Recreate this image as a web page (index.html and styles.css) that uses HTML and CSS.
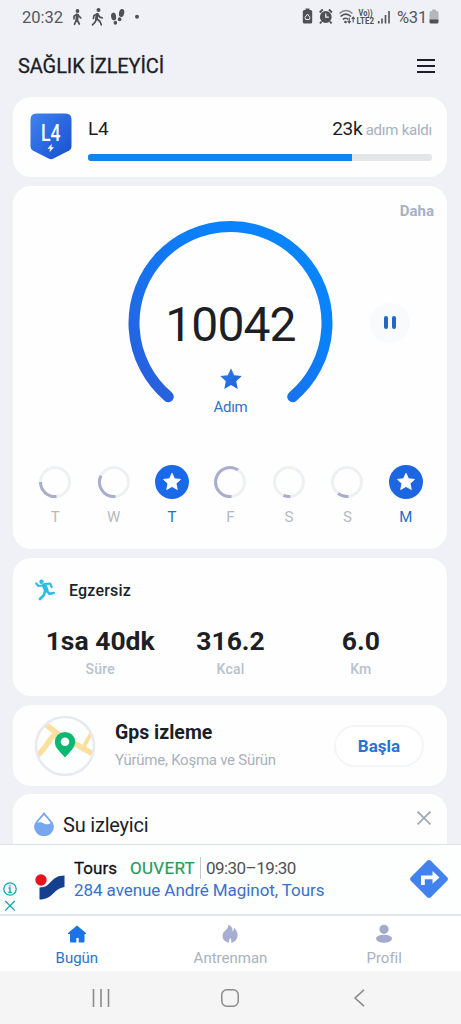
FILE: index.html
```
<!DOCTYPE html>
<html lang="tr">
<head>
    <meta charset="UTF-8">
    <meta name="viewport" content="width=device-width, initial-scale=1.0">
    <title>Sağlık İzleyici</title>
    <link rel="stylesheet" href="styles.css">
</head>
<body>
    <svg class="defs" width="0" height="0">
        <defs>
            <linearGradient id="blue" x1="0" y1="1" x2="1" y2="0">
                <stop offset="0" stop-color="#2b5cdb"/>
                <stop offset="0.65" stop-color="#0b80fb"/>
                <stop offset="1" stop-color="#0788ff"/>
            </linearGradient>
            <linearGradient id="deep" x1="0" y1="0" x2="1" y2="1">
                <stop offset="0" stop-color="#3f83ef"/>
                <stop offset="1" stop-color="#174fd0"/>
            </linearGradient>
            <linearGradient id="starfill" x1="0" y1="0" x2="1" y2="1">
                <stop offset="0" stop-color="#2a7ff0"/>
                <stop offset="1" stop-color="#2160d4"/>
            </linearGradient>
            <symbol id="star" viewBox="0 0 24 24">
                <path d="M12 1.2l3.2 7 7.6.9-5.6 5.2 1.5 7.6L12 18.1l-6.7 3.8 1.5-7.6L1.200 9.100l7.600-.9z" stroke-width="1" stroke-linejoin="round"/>
            </symbol>
        </defs>
    </svg>

    <div class="phone">
        <div class="status">
            <span class="time">20:32</span>
            <svg class="status-left" width="72" height="20" viewBox="0 0 72 20" fill="none" stroke="#505157" stroke-linecap="round" stroke-linejoin="round">
                <circle cx="7.500" cy="4" r="1.900" fill="#505157" stroke="none"/>
                <path d="M7.300 8l-.3 4" stroke-width="3"/>
                <path d="M7 12.500l2.300 4.500M6.800 12l-2.300 5.300M6.500 7.500L4 9.200v2.600M8 8l2.800 3" stroke-width="1.700"/>
                <circle cx="28.500" cy="3" r="2" fill="#505157" stroke="none"/>
                <path d="M27.300 7.500l-.8 4.300" stroke-width="3"/>
                <path d="M27 12l3 2.500 1.300 3.300M26.300 12.200l-1.200 3-2.600 2.600M27 7l-3 1.600-.6 2.800M28 7.500l1.800 2.600 2.300.8" stroke-width="1.700"/>
                <g fill="#505157" stroke="none">
                    <ellipse cx="43.600" cy="9.500" rx="2.500" ry="3.900" transform="rotate(-8 43.600 9.500)"/>
                    <ellipse cx="45.400" cy="15.800" rx="1.800" ry="2"/>
                    <ellipse cx="51.600" cy="6" rx="2.600" ry="4.100" transform="rotate(12 51.600 6)"/>
                    <ellipse cx="49.600" cy="12.200" rx="1.800" ry="2"/>
                    <circle cx="67" cy="9.800" r="2"/>
                </g>
            </svg>
            <svg class="status-right" width="92" height="20" viewBox="0 0 92 20" fill="none" stroke="#505157">
                <path d="M4.500 3v-1.500h4v1.500h1.200q1.500 0 1.500 1.500v10.500q0 1.500-1.500 1.500h-6.400q-1.500 0-1.500-1.500v-10.500q0-1.500 1.500-1.500z" fill="#505157" stroke="none"/>
                <path d="M4 10.500l2.500-3.500 2.500 3.500-.7 2H4.700z" stroke="#eef0f5" stroke-width="1"/>
                <circle cx="24.800" cy="10" r="5.900" fill="#505157" stroke="none"/>
                <path d="M18.700 5.500l3-3M30.900 5.500l-3-3M20.500 14.500l-1.500 2M29 14.500l1.500 2" stroke-width="1.900"/>
                <path d="M24.800 6.500v3.700h3" stroke="#eef0f5" stroke-width="1.300"/>
                <path d="M38.500 6.500q6.500-6 13 0" stroke="#85868b" stroke-width="1.500"/>
                <path d="M39.500 9.500q5.300-4.800 10.500 0M41.800 12.500q3-2.500 5.500 0" stroke-width="1.600"/>
                <circle cx="44.500" cy="15" r="1.300" fill="#505157" stroke="none"/>
                <path d="M48.200 10.500v5.500m-1.500-1.800l1.500 1.800 1.500-1.800M52.200 15.500v-5.500m-1.500 1.800l1.500-1.800 1.500 1.800" stroke-width="1.100"/>
                <text x="57.500" y="8.800" class="volte" textLength="14" lengthAdjust="spacingAndGlyphs">Vo))</text>
                <text x="55.500" y="16.800" class="volte" textLength="17.500" lengthAdjust="spacingAndGlyphs">LTE2</text>
                <path d="M77.700 14v2.500M81 11.500v5M84.500 8v8.500M88 4v12.500" stroke-width="1.600"/>
            </svg>
            <span class="percent">%31</span>
            <svg class="battery" width="10" height="16" viewBox="0 0 10 16">
                <path d="M3 2V.500h4V2h1q1.500 0 1.500 1.500V11H.5V3.500Q.5 2 2 2z" fill="#b5b6ba"/>
                <path d="M.5 10.500h9v2.500q0 1.500-1.500 1.500H2Q.5 14.500.5 13z" fill="#505157"/>
            </svg>
        </div>

        <div class="header">
            <h1>SAĞLIK İZLEYİCİ</h1>
            <div class="menu"><i></i><i></i><i></i></div>
        </div>

        <div class="content">
            <div class="card level">
                <svg width="42" height="47" viewBox="0 0 42 47">
                    <path d="M6.500.5h29q6 0 6 6v27q0 2.600-2.300 3.900L23.500 45.600q-2.500 1.300-5 0L2.800 37.400Q.5 36.100.5 33.500v-27q0-6 6-6z" fill="url(#deep)"/>
                    <text x="11" y="27.500" class="badge-text" textLength="19.500" lengthAdjust="spacingAndGlyphs">L4</text>
                    <path d="M21.500 31.500l-3.500 4h2.500l-.7 3 3.700-4H21z" fill="#fff" stroke="#fff" stroke-width=".5"/>
                </svg>
                <div class="level-info">
                    <div class="level-row">
                        <span>L4</span>
                        <span>23k <small>adım kaldı</small></span>
                    </div>
                    <div class="bar"><div class="bar-fill" style="width: 76.8%"></div></div>
                </div>
            </div>

            <div class="card steps">
                <div class="more">Daha</div>
                <div class="gauge-row">
                    <div class="gauge">
                        <svg class="gauge-ring" width="205" height="205" viewBox="0 0 205 205" fill="none">
                            <path d="M40.300 176.700A96.500 96.500 0 1 1 164.700 176.700" stroke="url(#blue)" stroke-width="11" stroke-linecap="round"/>
                        </svg>
                        <div class="gauge-text">
                            <div class="count">10042</div>
                            <svg width="24" height="24" fill="url(#starfill)" stroke="none"><use href="#star"/></svg>
                            <div class="unit">Adım</div>
                        </div>
                    </div>
                    <div class="pause"><i></i><i></i></div>
                </div>
                <div class="week">
                    <div class="day">
                        <svg width="34" height="34" viewBox="0 0 34 34"><circle class="track" cx="17" cy="17" r="14.500"/><path class="arc" d="M18.500 31.500A14.500 14.500 0 0 1 2.500 17"/></svg>
                        <span>T</span>
                    </div>
                    <div class="day">
                        <svg width="34" height="34" viewBox="0 0 34 34"><circle class="track" cx="17" cy="17" r="14.500"/><path class="arc" d="M18.500 31.500A14.500 14.500 0 0 1 4 10.600"/></svg>
                        <span>W</span>
                    </div>
                    <div class="day done">
                        <svg width="34" height="34" viewBox="0 0 34 34"><circle cx="17" cy="17" r="17" fill="#1a69e8"/><use href="#star" x="7.500" y="7.200" width="19" height="19" fill="#fff" stroke="#fff"/></svg>
                        <span>T</span>
                    </div>
                    <div class="day">
                        <svg width="34" height="34" viewBox="0 0 34 34"><circle class="track" cx="17" cy="17" r="14.500"/><path class="arc" d="M18.500 31.500A14.500 14.500 0 1 1 25 4.900"/></svg>
                        <span>F</span>
                    </div>
                    <div class="day">
                        <svg width="34" height="34" viewBox="0 0 34 34"><circle class="track" cx="17" cy="17" r="14.500"/><path class="arc" d="M18.300 31.400A14.500 14.500 0 0 1 11.500 30.400"/></svg>
                        <span>S</span>
                    </div>
                    <div class="day">
                        <svg width="34" height="34" viewBox="0 0 34 34"><circle class="track" cx="17" cy="17" r="14.500"/><path class="arc" d="M18.500 31.400A14.500 14.500 0 0 1 8 28.400"/></svg>
                        <span>S</span>
                    </div>
                    <div class="day done">
                        <svg width="34" height="34" viewBox="0 0 34 34"><circle cx="17" cy="17" r="17" fill="#1c66e4"/><use href="#star" x="7.500" y="7.200" width="19" height="19" fill="#fff" stroke="#fff"/></svg>
                        <span>M</span>
                    </div>
                </div>
            </div>

            <div class="card exercise">
                <div class="exercise-title">
                    <svg width="20" height="22" viewBox="0 0 20 22" fill="none" stroke="#2bbde3" stroke-linecap="round" stroke-linejoin="round">
                        <circle cx="6.500" cy="2.800" r="2.200" fill="#2bbde3" stroke="none"/>
                        <path d="M9.200 6.500l2 4.500" stroke-width="4.600"/>
                        <path d="M8 6.500L3.500 7 1.200 4.500M10 5l5-.5 1.700 3.500" stroke-width="2.200"/>
                        <path d="M11.500 11.500l3 3.300 4.200-.8M10 12L9 16l-4 4" stroke-width="2.600"/>
                    </svg>
                    <h2>Egzersiz</h2>
                </div>
                <div class="stats">
                    <div><b>1sa 40dk</b><span>Süre</span></div>
                    <div><b>316.2</b><span>Kcal</span></div>
                    <div><b>6.0</b><span>Km</span></div>
                </div>
            </div>

            <div class="card gps">
                <svg width="62" height="62" viewBox="0 0 62 62">
                    <clipPath id="map"><circle cx="31" cy="31" r="28"/></clipPath>
                    <circle cx="31" cy="31" r="29" fill="#fdfefe" stroke="#e9eaf1" stroke-width="2.500"/>
                    <g clip-path="url(#map)" fill="none" stroke="#fce0a1" stroke-width="5.500">
                        <path d="M11 9l13 10 35 20"/>
                        <path d="M23 17C12 27 15 30 3 41"/>
                        <path d="M49 33l9-16" stroke-width="4"/>
                    </g>
                    <path d="M31 42.500C24 35 20.800 32 20.800 26.800a10.200 9.800 0 0 1 20.400 0C41.200 32 38 35 31 42.500z" fill="#0cb772"/>
                    <circle cx="31" cy="26.700" r="4.300" fill="#fff"/>
                </svg>
                <div class="gps-text">
                    <h2>Gps izleme</h2>
                    <p>Yürüme, Koşma ve Sürün</p>
                </div>
                <button class="start">Başla</button>
            </div>

            <div class="card water">
                <svg width="20" height="24" viewBox="0 0 20 24">
                    <path d="M10 1.500C6.500 6.500 1 10 1 14.800a9 8.500 0 0 0 18 0C19 10 13.500 6.500 10 1.500z" fill="#fff" stroke="#76a7ef" stroke-width="1.800"/>
                    <path d="M1.500 12c3.500-2.500 6-2 8.500-.5s5 1 8.500-1.500c2 7-1.500 13.300-8.500 13.300S0 17.500 1.500 12z" fill="#76a7ef"/>
                </svg>
                <h2>Su izleyici</h2>
                <svg class="close" width="14" height="14" viewBox="0 0 14 14" stroke="#a3a8b1" stroke-width="1.800">
                    <path d="M.6.6l12.800 12.800M13.400.6L.6 13.400"/>
                </svg>
            </div>
        </div>

        <div class="ad">
            <svg class="ad-marks" width="14" height="34" viewBox="0 0 14 34" fill="none" stroke="#12a5b4" stroke-width="1.300">
                <circle cx="7" cy="9" r="6.200"/>
                <path d="M7 4.800v1.600M5.500 8H7v4.500M5.300 12.500h3.500"/>
                <path d="M2.200 21l9.600 9.600M11.800 21l-9.600 9.600"/>
            </svg>
            <svg class="ad-logo" width="30" height="27" viewBox="0 0 30 27">
                <path d="M4.500 14.500C17 14.500 15 2.500 29.500 2.500V14C18.500 15.500 18 26.500 4.500 26.500z" fill="#14408f"/>
                <circle cx="6" cy="7" r="6.600" fill="#fdfefe"/>
                <circle cx="6" cy="7" r="5.700" fill="#e5121f"/>
            </svg>
            <div class="ad-text">
                <div class="ad-row">
                    <span class="ad-name">Tours</span>
                    <span class="ad-open">OUVERT</span>
                    <span class="ad-hours">09:30–19:30</span>
                </div>
                <div class="ad-address">284 avenue André Maginot, Tours</div>
            </div>
            <svg class="ad-go" width="40" height="40" viewBox="0 0 40 40">
                <path d="M18.200 1.800q1.800-1.600 3.600 0l16.400 16.400q1.600 1.800 0 3.600L21.800 38.200q-1.800 1.600-3.600 0L1.800 21.800q-1.600-1.800 0-3.600z" fill="#4182ee"/>
                <path d="M12 26v-9.500h11.500v-4.500l7 6.500-7 6.300v-4.600H15.800V26z" fill="#fff"/>
            </svg>
        </div>

        <div class="tabs">
            <div class="tab active">
                <svg width="20" height="20" viewBox="0 0 20 20"><path d="M10 1.500l9 7.500q.5 1-.8 1H17.500v7.500q0 1-1 1H11.700v-4.500H9.300v4.500H4q-1 0-1-1V10H1.800Q.5 10 1 9z" fill="#1b73e6"/></svg>
                <span>Bugün</span>
            </div>
            <div class="tab">
                <svg width="20" height="20" viewBox="0 0 20 20"><path d="M8.500.5c4 2.500 4.300 4.500 4 7 1.500-1 1.700-2.500 1.500-4 4 4 4.500 8.500 2.300 12-1.200 2-3 3-5 3.200.3-2-.1-3.500-1.100-4.700-1 1.200-1.400 2.700-1.100 4.700C3 17.500 1.500 13 3.200 9 4.500 6.500 8.500 5 8.500.5z" fill="#a8aed1"/></svg>
                <span>Antrenman</span>
            </div>
            <div class="tab">
                <svg width="20" height="20" viewBox="0 0 20 20" fill="#a3abcc"><circle cx="10" cy="5.300" r="4.600"/><ellipse cx="10" cy="14.700" rx="8" ry="4"/></svg>
                <span>Profil</span>
            </div>
        </div>

        <div class="navbar">
            <svg width="18" height="18" viewBox="0 0 18 18" stroke="#8b8b8b" stroke-width="1.600"><path d="M1.500 0v18M9 0v18M16.500 0v18"/></svg>
            <svg width="18" height="18" viewBox="0 0 18 18" fill="none" stroke="#8b8b8b" stroke-width="1.500"><rect x=".8" y=".8" width="16.400" height="16.400" rx="5"/></svg>
            <svg width="18" height="18" viewBox="0 0 18 18" fill="none" stroke="#8b8b8b" stroke-width="1.600"><path d="M14 .8L5 9l9 8.200"/></svg>
        </div>
    </div>
</body>
</html>
```
FILE: styles.css
```
* {
    box-sizing: border-box;
}
body {
    margin: 0;
    background-color: #eff1f6;
    font-family: Roboto, "Liberation Sans", sans-serif;
    color: #1c1f26;
}
svg {
    display: block;
    flex: none;
}
h1, h2, p {
    margin: 0;
}
.defs {
    position: absolute;
}
.phone {
    width: 461px;
    height: 1024px;
    display: flex;
    flex-direction: column;
    overflow: hidden;
}

/* status bar */
.status {
    height: 34px;
    padding: 0 22px 0 22px;
    display: flex;
    align-items: center;
    color: #55565c;
    font-size: 16.5px;
}
.status-left {
    margin-left: 7px;
}
.status-right {
    margin-left: auto;
}
.volte {
    font-size: 8.5px;
    font-weight: 700;
    fill: #505157;
    stroke: none;
}
.percent {
    margin-left: 4px;
    letter-spacing: -0.2px;
}
.battery {
    margin-left: 2px;
}

.header {
    height: 63px;
    padding: 0 26px 0 18px;
    display: flex;
    align-items: center;
    justify-content: space-between;
}
.header h1 {
    font-size: 20px;
    font-weight: 400;
    letter-spacing: -0.1px;
    -webkit-text-stroke: 0.3px #1c1f26;
}
.menu {
    width: 18px;
    display: flex;
    flex-direction: column;
    gap: 4px;
}
.menu i {
    height: 2px;
    background-color: #1c1f26;
}

/* cards */
.content {
    height: 747px;
    padding: 0 14px 0 13px;
    display: flex;
    flex-direction: column;
    gap: 9px;
    overflow: hidden;
}
.card {
    flex: none;
    background-color: #fefefe;
    border-radius: 18px;
}
.level {
    height: 80px;
    padding: 16px 15px 0 17px;
    display: flex;
    gap: 16px;
}
.badge-text {
    font-size: 24px;
    font-weight: 500;
    fill: #fff;
}
.level-info {
    flex: 1;
}
.level-row {
    height: 41px;
    padding-top: 4px;
    display: flex;
    justify-content: space-between;
    font-size: 19px;
    line-height: 24px;
    letter-spacing: -0.3px;
}
.level-row small {
    margin-left: -1px;
    font-size: 15px;
    letter-spacing: -0.25px;
    color: #a9b0bf;
}
.bar {
    height: 7px;
    border-radius: 3px;
    background-color: #e4e6e7;
    overflow: hidden;
}
.bar-fill {
    height: 7px;
    background-color: #1085ed;
}

.steps {
    height: 363px;
    padding: 16px 12px 0 13px;
}
.more {
    padding-right: 1px;
    text-align: right;
    font-size: 15px;
    font-weight: 700;
    line-height: 18px;
    color: #a9b0c6;
}
.gauge-row {
    display: grid;
    grid-template-columns: 1fr 205px 1fr;
    align-items: center;
}
.gauge {
    grid-column: 2;
    display: grid;
}
.gauge-ring, .gauge-text {
    grid-area: 1 / 1;
}
.gauge-text {
    padding-top: 77px;
    display: flex;
    flex-direction: column;
    align-items: center;
}
.count {
    margin-bottom: 14px;
    font-size: 48px;
    line-height: 56px;
    letter-spacing: -0.9px;
}
.unit {
    margin-top: 7px;
    font-size: 15px;
    line-height: 18px;
    letter-spacing: -0.3px;
    color: #2f74c9;
}
.pause {
    width: 40px;
    height: 40px;
    margin-left: 37px;
    border-radius: 50%;
    background-color: #f8fafc;
    display: flex;
    align-items: center;
    justify-content: center;
    gap: 4px;
}
.pause i {
    width: 4px;
    height: 13px;
    border-radius: 2px;
    background-color: #2268c4;
}
.week {
    margin-top: 40px;
    display: grid;
    grid-template-columns: repeat(7, 1fr);
}
.day {
    display: flex;
    flex-direction: column;
    align-items: center;
    gap: 9px;
    font-size: 15px;
    line-height: 18px;
    color: #b4bac3;
}
.day.done {
    color: #1f6fcb;
}
.track {
    fill: none;
    stroke: #eff0f4;
    stroke-width: 3;
}
.arc {
    fill: none;
    stroke: #a9aecb;
    stroke-width: 3;
}

.exercise {
    height: 138px;
    padding: 21px 21px 0 22px;
}
.exercise-title {
    display: flex;
    align-items: center;
    gap: 14px;
}
.exercise h2 {
    font-size: 16px;
    font-weight: 500;
    letter-spacing: 0.2px;
}
.stats {
    margin-top: 23px;
    display: grid;
    grid-template-columns: repeat(3, 1fr);
    text-align: center;
}
.stats b {
    display: block;
    font-size: 26.5px;
    line-height: 34px;
}
.stats span {
    display: block;
    margin-top: 2px;
    font-size: 14px;
    font-weight: 500;
    line-height: 18px;
    letter-spacing: 0.2px;
    color: #b9c1cb;
}

.gps {
    height: 81px;
    padding: 0 23px 0 21px;
    display: flex;
    align-items: center;
}
.gps-text {
    flex: 1;
    margin-left: 19px;
}
.gps h2 {
    font-size: 19.5px;
    font-weight: 700;
    line-height: 24px;
}
.gps p {
    margin-top: 4px;
    font-size: 15px;
    line-height: 22px;
    letter-spacing: -0.25px;
    color: #aab0bc;
}
.start {
    width: 90px;
    height: 42px;
    border: 2px solid #f3f5f8;
    border-radius: 21px;
    background-color: #fff;
    font-family: inherit;
    font-size: 17px;
    font-weight: 700;
    color: #2a72d4;
}

.water {
    height: 90px;
    margin-top: -1px;
    padding: 16px 16px 0 21px;
    display: flex;
    align-items: flex-start;
}
.water svg {
    margin-top: 2px;
}
.water h2 {
    margin: 2px 0 0 9px;
    font-size: 20px;
    font-weight: 400;
    line-height: 26px;
    letter-spacing: -0.2px;
}
.water .close {
    margin: 1px 0 0 auto;
}

/* ad banner */
.ad {
    height: 72px;
    padding: 0 12px 0 3px;
    border-top: 1px solid #dfe1e5;
    border-bottom: 2px solid #e3e5e9;
    background-color: #fdfefe;
    display: flex;
    align-items: center;
}
.ad-marks {
    align-self: flex-end;
}
.ad-logo {
    margin: 14px 0 0 18px;
}
.ad-text {
    flex: 1;
    margin: -1px 0 0 9px;
    font-size: 17px;
    line-height: 22px;
    white-space: nowrap;
}
.ad-row {
    display: flex;
}
.ad-name {
    width: 56px;
    color: #111;
    -webkit-text-stroke: 0.3px #111;
}
.ad-open {
    width: 71px;
    border-right: 1px solid #c5c7ca;
    letter-spacing: 0.3px;
    color: #259a5c;
    -webkit-text-stroke: 0.2px #259a5c;
}
.ad-hours {
    margin-left: 5px;
    letter-spacing: -0.55px;
    color: #505256;
}
.ad-address {
    letter-spacing: -0.07px;
    color: #3871cb;
}
.ad-go {
    margin-top: -2px;
}

.tabs {
    height: 55px;
    padding-top: 8px;
    background-color: #fff;
    display: grid;
    grid-template-columns: repeat(3, 1fr);
}
.tab {
    display: flex;
    flex-direction: column;
    align-items: center;
    gap: 5px;
    font-size: 15px;
    line-height: 18px;
    color: #a8b2c1;
}
.tab.active {
    color: #2a74c9;
}

.navbar {
    height: 53px;
    padding: 0 93px 0 92px;
    background-color: #f5f5f5;
    display: flex;
    align-items: center;
    justify-content: space-between;
}
```
